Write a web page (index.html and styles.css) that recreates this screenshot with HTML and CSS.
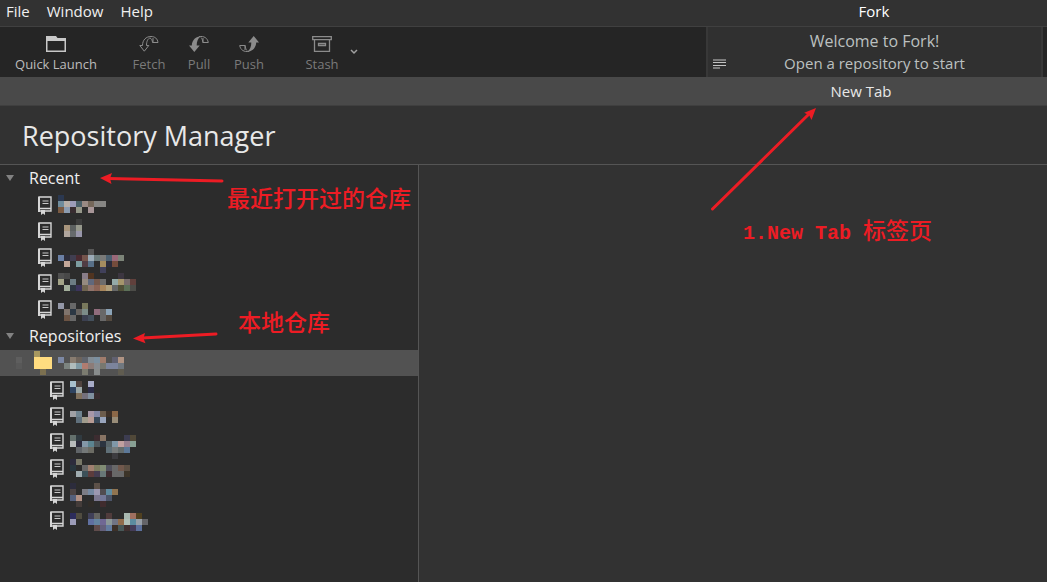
FILE: index.html
```html
<!DOCTYPE html>
<html lang="en">
<head>
<meta charset="utf-8">
<title>Fork</title>
<meta name="viewport" content="width=device-width, initial-scale=1">
<link rel="stylesheet" href="styles.css">
</head>
<body>
<svg class="sprite" aria-hidden="true">
  <symbol id="book" viewBox="0 0 14 19">
    <path d="M1 1h12v14H1zM1 12.5h12" fill="none" stroke="#d6d6d6" stroke-width="1.4"/>
    <path d="M1 1v15" stroke="#d6d6d6" stroke-width="2"/>
    <path d="M4.5 5h6M4.5 7.5h6" stroke="#c8c8c8" stroke-width="1.2"/>
    <path d="M3 14h4v5l-2-1.400-2 1.400z" fill="#d6d6d6"/>
  </symbol>
  <symbol id="twisty" viewBox="0 0 8 6"><path d="M0 0h8L4 6z" fill="#828282"/></symbol>
</svg>

<header class="menubar">
  <nav class="menus">
    <button type="button">File</button>
    <button type="button">Window</button>
    <button type="button">Help</button>
  </nav>
  <div class="window-title">Fork</div>
</header>

<div class="toolbar">
  <div class="tools">
    <button type="button" class="tool launch">
      <svg width="20" height="18" viewBox="0 0 20 18"><path d="M0 1h10l1.500 2H20v14H0zM1.500 6v9.500h17V6z" fill="#c8c8c8" fill-rule="evenodd"/></svg>
      <span>Quick Launch</span>
    </button>
    <button type="button" class="tool fetch">
      <svg width="20" height="18" viewBox="0 0 20 18"><path d="M.8 10.500H3.500C3.500 5 7 1.500 12 1.500c4 0 6.500 2.200 7 6h-5.500c0-2-1-4-2.500-4.500C9 3.500 7.500 6 7.500 10.500h2.300L5.300 16.200zM14 7.500V3" fill="none" stroke="#8b8b8b"/></svg>
      <span>Fetch</span>
    </button>
    <button type="button" class="tool pull">
      <svg width="20" height="18" viewBox="0 0 20 18"><path d="M0 10.500h2.800C3 5 7 1.200 12 1.200c-3 1.800-4.300 5-4.300 9.300h3L5.300 17z" fill="#8b8b8b"/><path d="M10 1.700c5-1 8.500 1.300 9.300 5.800h-5.500c0-2-.5-3.500-1.800-5M14 7.500V3" fill="none" stroke="#8b8b8b"/></svg>
      <span>Pull</span>
    </button>
    <button type="button" class="tool push">
      <svg width="20" height="18" viewBox="0 0 20 18"><path d="M20 7.500h-2.800C17 13 13 16.800 8 16.800c3-1.800 4.300-5 4.300-9.300h-3L14.700 1z" fill="#8b8b8b"/><path d="M10 16.300c-5 1-8.500-1.300-9.300-5.800h5.500c0 2 .5 3.500 1.800 5M6 10.500V15" fill="none" stroke="#8b8b8b"/></svg>
      <span>Push</span>
    </button>
    <button type="button" class="tool stash">
      <svg width="20" height="18" viewBox="0 0 20 18"><path d="M.7 1.700h18.600v3H.7zM2.500 4.700h15v11.600h-15zM6.500 8.500h7v2h-7z" fill="none" stroke="#8b8b8b" stroke-width="1.300"/></svg>
      <span>Stash</span>
    </button>
    <button type="button" class="more" aria-label="Stash options">
      <svg width="8" height="6" viewBox="0 0 8 6"><path d="M1 1l3 3 3-3" fill="none" stroke="#a0a0a0" stroke-width="1.500"/></svg>
    </button>
  </div>
  <section class="status">
    <svg class="lines" width="13" height="10" viewBox="0 0 13 10"><path d="M0 1h13M0 3.500h13M0 6.500h13M0 9h7" stroke="#c4c4c4" stroke-width="1.200"/></svg>
    <div class="welcome">Welcome to Fork!</div>
    <div class="hint">Open a repository to start</div>
  </section>
</div>

<div class="tabs" role="tablist"><button type="button" class="tab" role="tab" aria-selected="true">New Tab</button></div>

<main class="manager">
  <h1>Repository Manager</h1>
  <div class="panes">
    <aside class="sidebar">
      <section class="group">
        <button type="button" class="group-head"><svg width="8" height="6"><use href="#twisty"/></svg>Recent</button>
        <ul class="repos" data-set="recent"></ul>
      </section>
      <section class="group">
        <button type="button" class="group-head"><svg width="8" height="6"><use href="#twisty"/></svg>Repositories</button>
        <ul class="repos" data-set="folder"></ul>
        <ul class="repos nested" data-set="local"></ul>
      </section>
    </aside>
    <section class="detail"></section>
  </div>
</main>

<svg class="arrows" width="1047" height="582" viewBox="0 0 1047 582" aria-hidden="true">
  <g stroke="#ed1c24" stroke-width="3" stroke-linecap="round">
    <path d="M108 178.500L222 181M142 338L216 334M712.500 209L810 113"/>
  </g>
  <g fill="#ed1c24">
    <path d="M100 178l12-5-2 5.500 1.500 5.500z"/>
    <path d="M133 338.500l12-5.500-1.500 5.200 2 5z"/>
    <path d="M816 108l-4.500 12-2.300-4.800-5-2.500z"/>
  </g>
</svg>
<p class="note note-recent" lang="zh">最近打开过的仓库</p>
<p class="note note-local" lang="zh">本地仓库</p>
<p class="note note-tab" lang="zh"><span>1.New Tab </span>标签页</p>
<script src="app.js"></script>
</body>
</html>
```
FILE: styles.css
```css
* { box-sizing: border-box; }
body {
  margin: 0;
  min-height: 100vh;
  display: flex;
  flex-direction: column;
  background: #323232;
  color: #f0f0f0;
  font: 15px/20px "Open Sans", "Noto Sans", sans-serif;
  overflow: hidden;
}
button { margin: 0; padding: 0; border: 0; background: none; color: inherit; font: inherit; }
svg { display: block; flex: none; }
.sprite { position: absolute; width: 0; height: 0; }

.menubar {
  display: flex;
  justify-content: space-between;
  height: 27px;
  border-bottom: 1px solid #404040;
}
.menus { display: flex; gap: 17px; padding-left: 6px; height: 22px; }
.window-title { width: 336px; margin-right: 5px; line-height: 22px; text-align: center; color: #fff; }

.toolbar {
  display: flex;
  justify-content: space-between;
  height: 50px;
  padding-right: 4px;
  background: #252525;
}
.tools { display: flex; padding: 8px 0 0 6px; }
.tool {
  display: flex;
  flex-direction: column;
  align-items: center;
  gap: 1px;
  width: 50px;
  height: 38px;
  font-size: 13px;
  line-height: 20px;
  color: #7a7a7a;
  white-space: nowrap;
}
.launch { width: 100px; color: #bcbcbc; }
.fetch { margin-left: 18px; }
.stash { margin-left: 23px; }
.more { height: 34px; margin-left: 3px; display: flex; align-items: center; }
.status {
  position: relative;
  width: 337px;
  padding-top: 4px;
  border: 2px solid #383838;
  border-width: 0 2px;
  background: #303030;
  text-align: center;
  color: #bcc0c0;
}
.welcome { font-size: 16px; line-height: 21px; }
.hint { line-height: 22px; }
.lines { position: absolute; left: 5px; bottom: 8px; }

.tabs {
  display: flex;
  justify-content: flex-end;
  height: 29px;
  background: #494949;
  border-bottom: 1px solid #3f3f3f;
}
.tab { width: 372px; color: #e8e8e8; }

.manager { flex: 1; display: flex; flex-direction: column; }
h1 {
  margin: 0;
  padding: 9px 22px 8px;
  border-bottom: 1px solid #555;
  color: #e8e8e8;
  font-size: 27px;
  line-height: 41px;
  font-weight: 400;
}
.panes { flex: 1; display: flex; }
.sidebar { width: 40%; background: #2c2c2c; border-right: 1px solid #555; }
.detail { flex: 1; }
.group + .group { margin-top: 1px; }
.group-head {
  display: flex;
  align-items: center;
  gap: 15px;
  width: 100%;
  height: 26px;
  padding-left: 6px;
  font-size: 16px;
  text-align: left;
}
.repos { margin: 0; padding: 1px 0 0; list-style: none; }
.repo { display: flex; align-items: center; gap: 6px; height: 26px; padding-left: 38px; }
.nested .repo { padding-left: 50px; }
.repo.selected { background: #525252; padding-left: 16px; gap: 0; }
.mosaic { overflow: visible; }

.arrows { position: absolute; left: 0; top: 0; pointer-events: none; }
.note {
  position: absolute;
  margin: 0;
  color: #ed1c24;
  font: 500 23px/30px "Noto Sans CJK SC", sans-serif;
  white-space: pre;
}
.note span { font: 700 20px/30px "Liberation Mono", monospace; }
.note-recent { left: 227px; top: 182px; }
.note-local { left: 238px; top: 306px; }
.note-tab { left: 743px; top: 214px; }
```
FILE: app.js
```js
// Obscured repository names: blocks of 6px cells.
// Each entry is [top offset, ...rows]; a row lists cell colours, "-" is empty.
const CELL = 6;
const sets = {
  recent: [
    [3, "2b3850", "6f8c9c b8afa8 9c9bb8 4a5f68 998a84 75675a 878684 878684", "7a5a42 8c9cb0 382c30 96988a - a89698"],
    [1, "- - - 3c3c3c", "- a8957c 5c6060 96988c", "- b0a69e 666a6c 9896aa"],
    [5, "- - - - - 585858", "6b80a5 2d2d3a 403e50 4a2a30 74544c 9cacb8 6c7c7c 7a7a78 4c6070 9a6878 7c8478", "- c4a89a - 7c9ca0 503c44 587088 - a48c60 2c2c3c 744c3c", "- - - - - - - 40405a"],
    [3, "505050 484848 - - 887c88 503420 - - - - 3c3640", "a4a488 - 6c7c84 - 968a80 60687c 74584c 6c6c6c - 94aaa8 a4956c 786c6c 60403c", "- a4b09c 2c3440 3c345c 706450 90746c 8c6456 a8865c b0a07c 666868 505038 5c7058 4c4c48"],
    [7, "9498a8 - 686868 - 78785c", "- 80746c 2c3844 686460 7c8c88 - 906c7c 686868 8ca4b8", "- 6c5444 686868 - 3c4050 44505c - 686868 544a40"]
  ],
  folder: [
    [1, "- - - a89860", "5e5e5e - - ffdc80 ffdc80 ffdc80 - 7c88a4 - 887c70 6e645c 60646c 828c94 7c90a0 a07c6c - 606070 b09484", "585858 - - ffdc80 ffdc80 ffdc80 - - 7c8480 b0bcbc 809aa4 b07c70 8c7c78 888c90 787870 7c849c 7c849c 707880", "- - - - 7c7050 - - - - - - 7c7c70 - 888c8c - - - 605c50"]
  ],
  local: [
    [4, "a8c0cc 504440 - a8acc8", "304460 9ca8a8 - 2c2c48", "- 80705c 74707c 8090a0 382c30"],
    [8, "a0a0a4 708490 - a898a8 8488a4 6c5c4c 3c3028 8c6848", "- 60707c a09c8c b89c94 384858 98a4bc - 988c78"],
    [6, "64706c 303a40 - - 3c2c30 887464 - - - 3c3c50 504838", "b8bcbc 2c2c3c 8498a8 5c8490 50585c 2c3440 586468 8098a8 c0a0a0 988090 88a094", "- 606468 747878 6c6c64 - - 607078 787c7c 646c6c 5c7898", "- - - - - - - 3c3c40"],
    [4, "2c2c3c 787868", "28363e - 686868 a08070 7c7c60 808c74 50505c 686868 70584c 5c5044", "- a0acb0 3c5058 5c3c3c 443c50 687878 3c2c30 686868 686868 3c3428"],
    [2, "2c2c3c - - - 5c5048", "4c4444 - 7c7c84 7488a0 9c98b0 504c50 608ca0 907450", "54607c b09084 - - 7c7890 747898 4c5468", "- 443c3a - 302c28 - 402c2e"],
    [6, "2c2c5c 504c40 - 404058 646460 - 503c3c - - a8b8b0 a07060 504020", "9c9cb8 - - 6070a0 6484a0 706894 8c9898 707484 906c4c b0c0b8 5c8ca0 98a0a8 646468", "- - - - 604c4c 64607c 647ca0 3c3028 485858 403030 443c58 5c709c"]
  ]
};

function mosaic([top, ...rows]) {
  const cells = rows.flatMap((row, y) => row.split(" ").map((c, x) =>
    c === "-" ? "" : `<rect x="${x * CELL}" y="${top + y * CELL}" width="${CELL}" height="${CELL}" fill="#${c}"/>`));
  return `<svg class="mosaic" width="108" height="26" shape-rendering="crispEdges">${cells.join("")}</svg>`;
}

for (const list of document.querySelectorAll(".repos")) {
  const name = list.dataset.set;
  const icon = name === "folder" ? "" : '<svg width="14" height="19"><use href="#book"/></svg>';
  list.innerHTML = sets[name].map(entry =>
    `<li class="repo${name === "folder" ? " selected" : ""}">${icon}${mosaic(entry)}</li>`).join("");
}
```
